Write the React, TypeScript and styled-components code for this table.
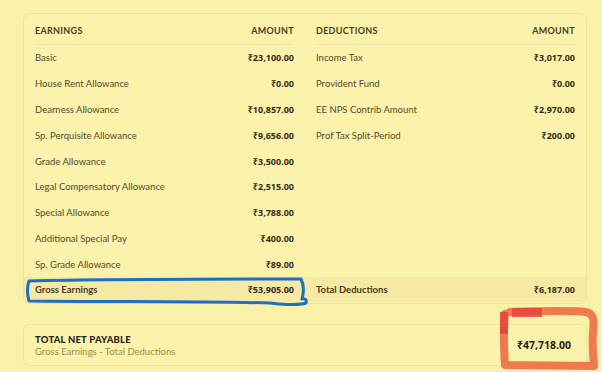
import React from 'react';
import styled, { createGlobalStyle } from 'styled-components';

const GlobalStyle = createGlobalStyle`
	html, body {
		margin: 0;
		padding: 0;
		background: #faf1a9;
	}
	body {
		font-family: 'Lato', 'Noto Sans', sans-serif;
		-webkit-font-smoothing: antialiased;
	}
`;

const Page = styled.div`
	position: relative;
	width: 602px;
	height: 372px;
	padding: 13px 15px 0 23px;
	box-sizing: border-box;
	background: #faf1a9;
	overflow: hidden;
`;

const Card = styled.div`
	display: grid;
	grid-template-columns: 1fr 1fr;
	border: 1px solid #efe39c;
	border-radius: 7px;
	background: #fbf2ab;
	overflow: hidden;
`;

const Column = styled.div`
	display: flex;
	flex-direction: column;
`;

const Head = styled.div`
	display: flex;
	justify-content: space-between;
	align-items: center;
	height: 30px;
	padding: 3px 11px 0 11px;
	box-sizing: border-box;
	font-size: 9px;
	font-weight: 700;
	letter-spacing: 0.3px;
	color: #4b3c22;
`;

const HeadRule = styled.div`
	height: 1px;
	margin: 0 11px;
	background: #f1e4a3;
`;

const Row = styled.div`
	display: flex;
	justify-content: space-between;
	align-items: center;
	height: 25.8px;
	padding: 0 11px;
	font-size: 9.5px;
	color: #5a492a;
`;

const Amount = styled.span`
	font-family: 'Noto Sans', sans-serif;
	font-weight: 700;
	font-size: 9px;
	color: #3a2c15;
`;

const Filler = styled.div`
	flex: 1;
`;

const TotalRow = styled(Row)`
	height: 25px;
	margin-bottom: 1px;
	background: #f6e9a3;
	font-weight: 700;
	color: #4b3c22;
`;

const NetCard = styled.div`
	display: flex;
	justify-content: space-between;
	align-items: center;
	height: 42px;
	margin-top: 20px;
	padding: 0 15px 0 11px;
	border: 1px solid #efe39c;
	border-radius: 7px;
	background: #fbf2ab;
	box-sizing: border-box;
`;

const NetText = styled.div`
	display: flex;
	flex-direction: column;
	gap: 1px;
`;

const NetTitle = styled.div`
	font-size: 9.5px;
	font-weight: 900;
	letter-spacing: 0.2px;
	color: #2e2414;
`;

const NetSub = styled.div`
	font-size: 9.5px;
	color: #a38b4c;
`;

const NetAmount = styled(Amount)`
	font-size: 10.5px;
	color: #2a2012;
`;

const Marks = styled.svg`
	position: absolute;
	left: 0;
	top: 0;
	pointer-events: none;
`;

const earnings = [
	['Basic', '₹23,100.00'],
	['House Rent Allowance', '₹0.00'],
	['Dearness Allowance', '₹10,857.00'],
	['Sp. Perquisite Allowance', '₹9,656.00'],
	['Grade Allowance', '₹3,500.00'],
	['Legal Compensatory Allowance', '₹2,515.00'],
	['Special Allowance', '₹3,788.00'],
	['Additional Special Pay', '₹400.00'],
	['Sp. Grade Allowance', '₹89.00'],
];

const deductions = [
	['Income Tax', '₹3,017.00'],
	['Provident Fund', '₹0.00'],
	['EE NPS Contrib Amount', '₹2,970.00'],
	['Prof Tax Split-Period', '₹200.00'],
];

function Side({ title, rows, total, totalValue }: any) {
	return (
		<Column>
			<Head>
				<span>{title}</span>
				<span>AMOUNT</span>
			</Head>
			<HeadRule />
			{rows.map(([label, value]: string[]) => (
				<Row key={label}>
					<span>{label}</span>
					<Amount>{value}</Amount>
				</Row>
			))}
			<Filler />
			<TotalRow>
				<span>{total}</span>
				<Amount>{totalValue}</Amount>
			</TotalRow>
		</Column>
	);
}

function App() {
	return (
		<Page>
			<GlobalStyle />
			<Card>
				<Side title="EARNINGS" rows={earnings} total="Gross Earnings" totalValue="₹53,905.00" />
				<Side title="DEDUCTIONS" rows={deductions} total="Total Deductions" totalValue="₹6,187.00" />
			</Card>
			<NetCard>
				<NetText>
					<NetTitle>TOTAL NET PAYABLE</NetTitle>
					<NetSub>Gross Earnings - Total Deductions</NetSub>
				</NetText>
				<NetAmount>₹47,718.00</NetAmount>
			</NetCard>
			<Marks width="602" height="372" viewBox="0 0 602 372">
				<path
					d="M29 281 C 110 279, 220 279, 301 279 C 304 285, 304 292, 302 299 C 305 298, 307 300, 306 303 C 300 305, 288 305, 270 303 C 200 301, 100 302, 29 301 C 27 294, 27 287, 29 281"
					fill="none"
					stroke="#1d6fc4"
					strokeWidth="3"
					strokeLinejoin="round"
					strokeLinecap="round"
				/>
				<path
					d="M510 312 C 540 311, 570 310, 586 312 C 595 314, 594 322, 593 332 C 592 345, 593 356, 594 366 C 570 366, 530 365, 505 365 C 504 350, 503 330, 505 314"
					fill="none"
					stroke="#ef7a50"
					strokeWidth="8"
					strokeLinejoin="round"
					strokeLinecap="round"
				/>
				<rect x="500" y="312" width="8" height="22" fill="#e6443c" opacity="0.85" />
				<rect x="512" y="308" width="30" height="9" fill="#e6443c" opacity="0.85" />
			</Marks>
		</Page>
	);
}

export default App;
